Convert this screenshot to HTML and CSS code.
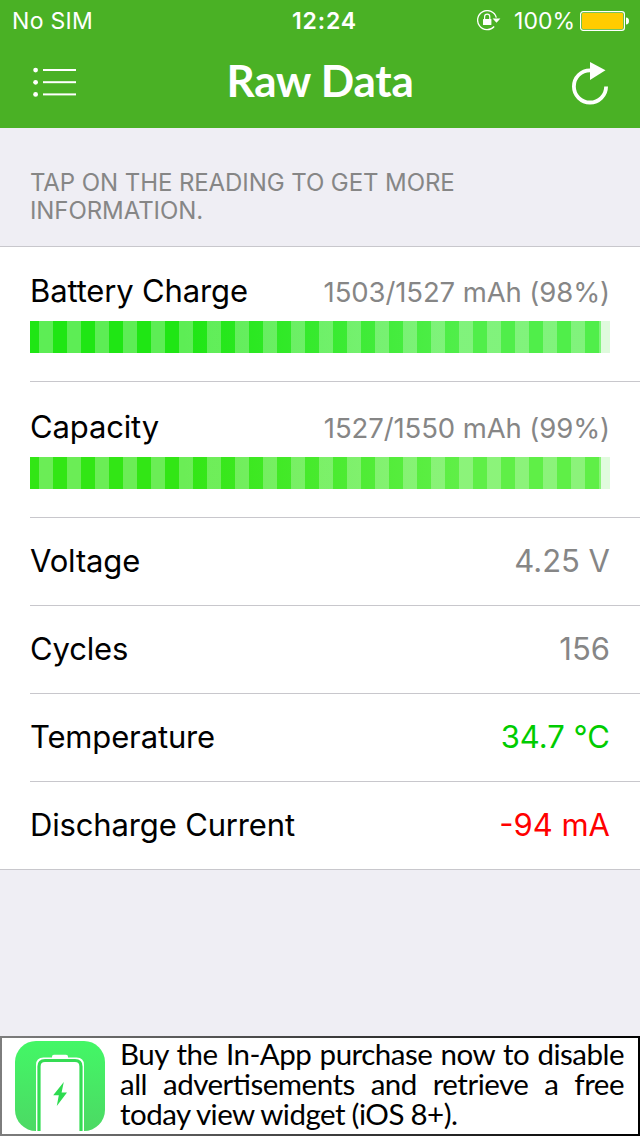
FILE: index.html
```html
<!DOCTYPE html>
<html lang="en">
<head>
  <meta charset="UTF-8">
  <meta name="viewport" content="width=device-width, initial-scale=1.0">
  <title>Raw Data</title>
  <link rel="stylesheet" href="styles.css">
</head>
<body>
  <div class="app">
    <header class="header">
      <div class="status-bar">
        <span class="carrier">No SIM</span>
        <span class="clock">12:24</span>
        <div class="status-right">
          <svg width="24" height="22" viewBox="0 0 24 22" fill="none" stroke="#fff">
            <path d="M19.300 7.600A9.500 9.500 0 1 0 17.200 16.500" stroke-width="1.300"></path>
            <path d="M15.600 8.600h7.800l-3.900 4.200z" fill="#fff" stroke="none"></path>
            <rect x="6" y="9" width="8.400" height="6" rx=".5" fill="#fff" stroke="none"></rect>
            <path d="M7.600 9.200V6.800a2.600 2.600 0 0 1 5.200 0v2.400" stroke-width="1.200"></path>
          </svg>
          <span class="percent">100%</span>
          <svg width="50" height="20" viewBox="0 0 50 20">
            <rect x=".6" y=".6" width="43.8" height="18.8" rx="2.6" fill="none" stroke="#fff" stroke-width="1.2"></rect>
            <rect x="2" y="2" width="41" height="16" rx="1" fill="#ffcc00"></rect>
            <path d="M46 6.500c2 0 3 1.300 3 3.500s-1 3.500-3 3.500z" fill="#fff"></path>
          </svg>
        </div>
      </div>
      <div class="nav-bar">
        <button class="nav-btn menu-btn" aria-label="Menu">
          <svg width="44" height="30" viewBox="0 0 44 30" fill="#fff">
            <circle cx="2.6" cy="3.1" r="2.4"></circle>
            <circle cx="2.6" cy="15.3" r="2.4"></circle>
            <circle cx="2.6" cy="27.4" r="2.4"></circle>
            <rect x="10" y="2" width="33" height="2"></rect>
            <rect x="10" y="14.2" width="33" height="2"></rect>
            <rect x="10" y="26.4" width="33" height="2"></rect>
          </svg>
        </button>
        <h1 class="title">Raw Data</h1>
        <button class="nav-btn refresh-btn" aria-label="Refresh">
          <svg width="38" height="44" viewBox="0 0 38 44">
            <path d="M34.100 25.400A16.100 16.100 0 1 1 18 9.300" fill="none" stroke="#fff" stroke-width="3.800"></path>
            <path d="M18 1v18l15.500-9.800z" fill="#fff"></path>
          </svg>
        </button>
      </div>
    </header>

    <p class="hint">Tap on the reading to get more information.</p>

    <div class="list">
      <div class="row row-meter">
        <div class="row-line">
          <span class="label">Battery Charge</span>
          <span class="value value-small">1503/1527 mAh (98%)</span>
        </div>
        <div class="meter"><div class="meter-fill" style="width: 98.43%"></div></div>
      </div>
      <div class="row row-meter">
        <div class="row-line">
          <span class="label">Capacity</span>
          <span class="value value-small">1527/1550 mAh (99%)</span>
        </div>
        <div class="meter meter-capacity"><div class="meter-fill" style="width: 98.52%"></div></div>
      </div>
      <div class="row">
        <span class="label">Voltage</span>
        <span class="value">4.25 V</span>
      </div>
      <div class="row">
        <span class="label">Cycles</span>
        <span class="value">156</span>
      </div>
      <div class="row">
        <span class="label">Temperature</span>
        <span class="value value-good">34.7 °C</span>
      </div>
      <div class="row">
        <span class="label">Discharge Current</span>
        <span class="value value-bad">-94 mA</span>
      </div>
    </div>

    <div class="banner">
      <div class="banner-inner">
        <svg class="app-icon" width="90" height="90" viewBox="0 0 90 90">
          <defs>
            <linearGradient id="icon-bg" x1="0" y1="0" x2="0" y2="1">
              <stop offset="0" stop-color="#43f766"></stop>
              <stop offset="1" stop-color="#4cd964"></stop>
            </linearGradient>
          </defs>
          <rect width="90" height="90" rx="21" fill="url(#icon-bg)"></rect>
          <path d="M37 17v-1.500q0-1.800 2-1.800h12q2 0 2 1.800V17z" fill="#fff"></path>
          <path d="M21 90V24q0-7.500 7.500-7.500h33q7.500 0 7.500 7.500v66z" fill="#fff"></path>
          <path d="M24 90V25.500q0-6 6-6h30q6 0 6 6V90" fill="none" stroke="#35dc54" stroke-width="3.200"></path>
          <path d="M48.800 41L38.200 54.200h5.600L41.800 65 52 51.500h-5.400z" fill="#2edb50"></path>
        </svg>
        <p class="banner-text">Buy the In-App purchase now to disable all advertisements and retrieve a free today view widget (iOS 8+).</p>
      </div>
    </div>
  </div>
</body>
</html>
```
FILE: styles.css
```css
:root {
  --green: #4ab125;
  --bg: #efeef4;
  --line: #c8c7cc;
  --gray: #868686;
}

* {
  margin: 0;
  padding: 0;
  box-sizing: border-box;
}

body {
  font-family: 'Inter', 'Liberation Sans', sans-serif;
  background-color: var(--bg);
  color: #000;
}

.app {
  display: flex;
  flex-direction: column;
  height: 1136px;
  width: 640px;
}

/* Header */
.header {
  height: 128px;
  background-color: var(--green);
  color: #fff;
}

.status-bar {
  display: grid;
  grid-template-columns: 1fr auto 1fr;
  align-items: center;
  height: 40px;
  padding: 1px 10px 0 12px;
  font-size: 23px;
  line-height: 40px;
}

.carrier {
  letter-spacing: 0.3px;
}

.clock {
  font-weight: 600;
  letter-spacing: 0.9px;
  padding-left: 7px;
}

.status-right {
  display: flex;
  align-items: center;
  justify-content: flex-end;
}

.percent {
  margin-left: 13px;
  margin-right: 5px;
}

.nav-bar {
  display: grid;
  grid-template-columns: 1fr auto 1fr;
  align-items: center;
  height: 88px;
  padding: 0 30px 0 33px;
}

.nav-btn {
  background: transparent;
  border: none;
  display: flex;
}

.menu-btn {
  padding-bottom: 7px;
}

.refresh-btn {
  justify-content: flex-end;
  padding-bottom: 4px;
}

.title {
  font-family: 'Lato', sans-serif;
  font-size: 44px;
  font-weight: 700;
  letter-spacing: -0.2px;
  line-height: 80px;
  padding-right: 3px;
  padding-bottom: 10px;
}

.hint {
  height: 118px;
  padding: 41px 150px 0 30px;
  font-size: 24px;
  line-height: 28px;
  letter-spacing: -0.08px;
  color: var(--gray);
  text-transform: uppercase;
}

/* Readings */
.list {
  background-color: #fff;
  border-top: 1px solid var(--line);
  border-bottom: 1px solid var(--line);
}

.row {
  display: flex;
  align-items: center;
  justify-content: space-between;
  height: 88px;
  margin-left: 30px;
  padding-right: 30px;
  padding-bottom: 2px;
  border-bottom: 1px solid var(--line);
}

.row:last-child {
  height: 87px;
  border-bottom: none;
}

.row-meter {
  flex-direction: column;
  align-items: stretch;
  justify-content: flex-end;
  height: 136px;
  padding-bottom: 28px;
}

.row-meter:first-child {
  height: 135px;
}

.row-line {
  display: flex;
  align-items: baseline;
  justify-content: space-between;
  height: 49px;
}

.label,
.value {
  font-size: 31px;
}

.label {
  letter-spacing: -0.15px;
}

.value {
  color: var(--gray);
}

.value-small {
  font-size: 27.5px;
  letter-spacing: -0.1px;
}

.value-good {
  color: #00cc00;
}

.value-bad {
  color: #ff0000;
}

.meter {
  height: 32px;
  background-color: #dffadd;
}

.meter-fill {
  height: 100%;
  background-image:
    repeating-linear-gradient(90deg, rgba(255, 255, 255, 0.28) 0, rgba(255, 255, 255, 0.28) 14px, transparent 14px, transparent 28px),
    linear-gradient(90deg, #1fe614 0, #1fe614 27%, #50ee4a 75%, #50ee4a 100%);
  background-position: -19px 0, 0 0;
  background-size: 616px 100%, 100% 100%;
}

.meter-capacity {
  background-color: #e1fbde;
}

.meter-capacity .meter-fill {
  background-image:
    repeating-linear-gradient(90deg, rgba(255, 255, 255, 0.28) 0, rgba(255, 255, 255, 0.28) 14px, transparent 14px, transparent 28px),
    linear-gradient(90deg, #32e615 0, #32e615 27%, #5fef47 75%, #5fef47 100%);
}

/* Ad banner */
.banner {
  height: 100px;
  margin-top: auto;
  padding: 2px;
  background-image: linear-gradient(90deg, #7d7d7d, #000);
}

.banner-inner {
  display: flex;
  align-items: flex-start;
  gap: 15px;
  height: 96px;
  padding: 3px 14px 0 13px;
  background-color: #fff;
}

.app-icon {
  flex: none;
}

.banner-text {
  flex: 1;
  margin-top: -2px;
  font-family: 'Lato', sans-serif;
  font-size: 29.5px;
  line-height: 30px;
  letter-spacing: -0.5px;
  word-spacing: -0.5px;
  font-feature-settings: "liga" 1;
  text-align: justify;
}
```
